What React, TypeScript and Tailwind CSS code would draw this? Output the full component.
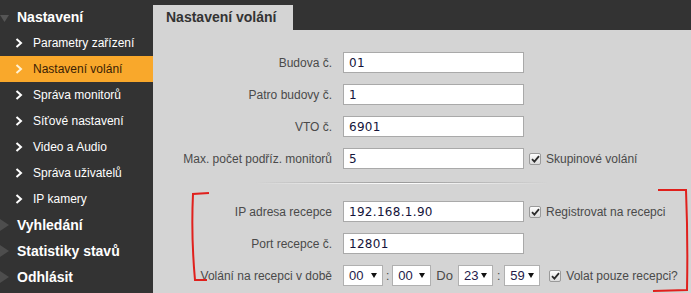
import React from 'react';

const menu = [
  { label: 'Parametry zařízení' },
  { label: 'Nastavení volání', active: true },
  { label: 'Správa monitorů' },
  { label: 'Síťové nastavení' },
  { label: 'Video a Audio' },
  { label: 'Správa uživatelů' },
  { label: 'IP kamery' },
];

function Chevron({ color }: { color: string }) {
  return (
    <svg width="8" height="10" viewBox="0 0 8 10" className="shrink-0">
      <polyline points="1.5,1 6,5 1.5,9" fill="none" stroke={color} strokeWidth="2" />
    </svg>
  );
}

function Check() {
  return (
    <span className="flex h-[12px] w-[12px] shrink-0 items-center justify-center rounded-[2px] border border-[#9a9a9a] bg-gradient-to-b from-[#fdfdfd] to-[#dcdcdc]">
      <svg width="9" height="8" viewBox="0 0 9 8">
        <polyline points="1,4.2 3.4,6.6 8,1.2" fill="none" stroke="#2b2b2b" strokeWidth="1.8" />
      </svg>
    </span>
  );
}

function Field({ label, value, extra }: { label: string; value: string; extra?: string }) {
  return (
    <div className="flex h-[21px] items-center">
      <div className="w-[180px] pr-[1px] text-right text-[12px] text-[#4a4a4a]">{label}</div>
      <div className="ml-[10px] flex h-[21px] w-[181px] items-center border border-[#a9a9a9] bg-white pl-[5px] font-['DejaVu_Sans',sans-serif] text-[12px] tracking-[0.3px] text-[#14143a]">
        {value}
      </div>
      {extra && (
        <div className="ml-[5px] flex items-center gap-[5px] text-[12px] text-[#4a4a4a]">
          <Check />
          <span>{extra}</span>
        </div>
      )}
    </div>
  );
}

function Sel({ value, w }: { value: string; w: string }) {
  return (
    <div className={`flex h-[21px] ${w} items-center justify-between border border-[#b0b0b0] bg-white pl-[5px] pr-[5px] text-[13px] text-[#241a4a]`}>
      <span>{value}</span>
      <svg width="6" height="5" viewBox="0 0 6 5">
        <polygon points="0,0 6,0 3,5" fill="#111111" />
      </svg>
    </div>
  );
}

export default function App() {
  return (
    <div className="relative flex h-[293px] w-[691px] overflow-hidden font-['Liberation_Sans',Arial,sans-serif]">
      <aside className="w-[153px] shrink-0 bg-[#333333] pt-[4px]">
        <div className="relative flex h-[26px] items-center pl-[17px] text-[14px] font-bold text-white">
          <svg width="10" height="8" viewBox="0 0 10 8" className="absolute left-0 top-[11px]">
            <polygon points="0,0 9,0 4.5,7" fill="#555555" />
          </svg>
          Nastavení
        </div>
        {menu.map((m) => (
          <div
            key={m.label}
            className={`flex h-[26px] items-center gap-[10px] pl-[15px] text-[12px] ${m.active ? 'bg-[#f9a82b] text-[#3a2104]' : 'text-white'}`}
          >
            <Chevron color={m.active ? '#fff3d6' : '#ffffff'} />
            <span>{m.label}</span>
          </div>
        ))}
        {['Vyhledání', 'Statistiky stavů', 'Odhlásit'].map((t) => (
          <div key={t} className="relative flex h-[26px] items-center pl-[17px] text-[14px] font-bold text-white">
            <svg width="10" height="12" viewBox="0 0 10 12" className="absolute left-0 top-[7px]">
              <polygon points="0,0 9,6 0,12" fill="#4d4d4d" />
            </svg>
            {t}
          </div>
        ))}
      </aside>

      <main className="flex flex-1 flex-col bg-[#d4d4d4]">
        <div className="flex h-[30px] items-end bg-[#333333]">
          <div className="flex h-[25px] w-[140px] items-center bg-[#d4d4d4] pl-[13px] text-[14px] font-bold text-[#333333]">
            Nastavení volání
          </div>
        </div>

        <div className="flex flex-col gap-[11px] pt-[22px]">
          <Field label="Budova č." value="01" />
          <Field label="Patro budovy č." value="1" />
          <Field label="VTO č." value="6901" />
          <Field label="Max. počet podříz. monitorů" value="5" extra="Skupinové volání" />
        </div>

        <div className="ml-[103px] mt-[13px] w-[292px]">
          <div className="h-[1px] bg-gradient-to-r from-transparent via-[#9a9a9a] to-transparent" />
          <div className="h-[1px] bg-gradient-to-r from-transparent via-white to-transparent" />
        </div>

        <div className="mt-[17px] flex flex-col gap-[11px]">
          <Field label="IP adresa recepce" value="192.168.1.90" extra="Registrovat na recepci" />
          <Field label="Port recepce č." value="12801" />
          <div className="flex h-[21px] items-center text-[12px] text-[#4a4a4a]">
            <div className="w-[180px] pr-[1px] text-right">Volání na recepci v době</div>
            <div className="ml-[10px] flex items-center">
              <Sel value="00" w="w-[40px]" />
              <span className="px-[3px]">:</span>
              <Sel value="00" w="w-[39px]" />
              <span className="px-[5px] text-[13px]">Do</span>
              <Sel value="23" w="w-[35px]" />
              <span className="px-[4px]">:</span>
              <Sel value="59" w="w-[36px]" />
              <span className="ml-[9px] flex items-center gap-[5px]">
                <Check />
                <span>Volat pouze recepci?</span>
              </span>
            </div>
          </div>
        </div>
      </main>

      <svg width="691" height="293" className="pointer-events-none absolute left-0 top-0">
        <path d="M209,193 L193,194 Q191,236 195,280 L207,280" fill="none" stroke="#e0201c" strokeWidth="2" />
        <path d="M658,190 L686,190 Q688,240 687,290 L653,291" fill="none" stroke="#e0201c" strokeWidth="2" />
      </svg>
    </div>
  );
}
